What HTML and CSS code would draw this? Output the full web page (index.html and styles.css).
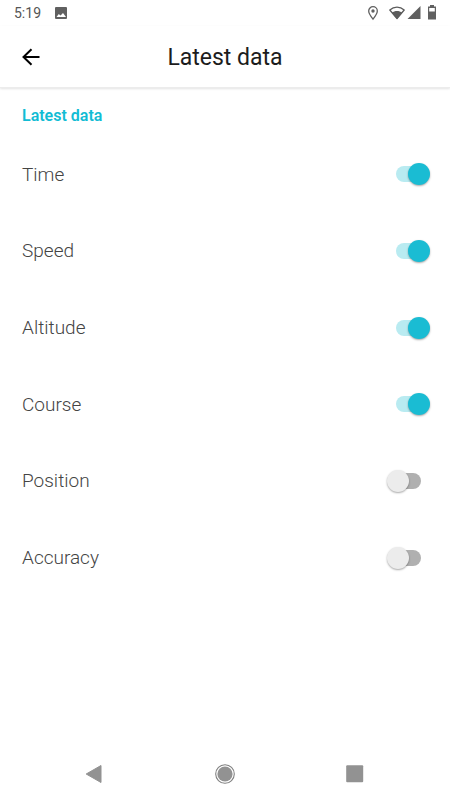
FILE: index.html
```
<!DOCTYPE html>
<html lang="en">
<head>
	<meta charset="UTF-8">
	<meta name="viewport" content="width=device-width, initial-scale=1">
	<title>Latest data</title>
	<link rel="stylesheet" href="styles.css">
</head>
<body>
	<div class="status">
		<span class="clock">5:19</span>
		<svg class="picture" width="14" height="14" viewBox="0 0 14 14">
			<path fill="#606060" fill-rule="evenodd" d="M2 1h10a1 1 0 0 1 1 1v10a1 1 0 0 1-1 1H2a1 1 0 0 1-1-1V2a1 1 0 0 1 1-1zM2.500 11h9.500L9 7 6.500 9.500 4.800 8z"/>
		</svg>
		<div class="signals">
			<svg width="12" height="16" viewBox="0 0 12 16">
				<path fill="none" stroke="#606060" stroke-width="1.300" d="M6 14.200C3.500 11 1.700 8.500 1.700 6a4.300 4.300 0 0 1 8.600 0c0 2.500-1.800 5-4.300 8.200z"/>
				<circle cx="6" cy="6" r="1.700" fill="#606060"/>
			</svg>
			<svg class="wifi" width="16" height="16" viewBox="0 0 16 16">
				<path fill="none" stroke="#5c5c5c" stroke-width="1.300" stroke-linejoin="round" d="M8 13.500L.8 5C5 1.200 11 1.200 15.200 5z"/>
				<path fill="#5c5c5c" d="M8 14L2.800 7.800c3-2.400 7.400-2.400 10.400 0z"/>
			</svg>
			<svg class="cell" width="14" height="16" viewBox="0 0 14 16">
				<path fill="#606060" d="M13.500 1v13H.5z"/>
			</svg>
			<svg class="battery" width="10" height="16" viewBox="0 0 10 16">
				<path fill="#606060" fill-rule="evenodd" d="M3 0h4v1.500h2V14.500H1V1.500h2zM2.200 3v3.500h5.600V3z"/>
			</svg>
		</div>
	</div>
	<header class="bar">
		<button class="back" aria-label="Back">
			<svg width="20" height="20" viewBox="0 0 20 20">
				<path fill="none" stroke="#000" stroke-width="2" d="M18.500 10H3M10.500 2.200L2.500 10l8 7.800"/>
			</svg>
		</button>
		<h1>Latest data</h1>
	</header>
	<main>
		<h2>Latest data</h2>
		<div class="list">
			<label class="item">Time <input type="checkbox" class="switch" checked></label>
			<label class="item">Speed <input type="checkbox" class="switch" checked></label>
			<label class="item">Altitude <input type="checkbox" class="switch" checked></label>
			<label class="item">Course <input type="checkbox" class="switch" checked></label>
			<label class="item">Position <input type="checkbox" class="switch"></label>
			<label class="item">Accuracy <input type="checkbox" class="switch"></label>
		</div>
	</main>
	<nav class="nav">
		<button aria-label="Back">
			<svg width="20" height="20" viewBox="0 0 20 20">
				<path fill="#929292" stroke="#929292" stroke-linejoin="round" d="M16 1.500v17L1.200 10z"/>
			</svg>
		</button>
		<button aria-label="Home">
			<svg width="20" height="20" viewBox="0 0 20 20">
				<circle cx="10" cy="10" r="9.300" fill="none" stroke="#808080" stroke-width="1.100"/>
				<circle cx="10" cy="10" r="7.600" fill="#929292"/>
			</svg>
		</button>
		<button aria-label="Recent apps">
			<svg width="20" height="20" viewBox="0 0 20 20">
				<rect x="1.200" y="1.200" width="17" height="17" rx="1" fill="#929292"/>
			</svg>
		</button>
	</nav>
</body>
</html>
```
FILE: styles.css
```
* {
	box-sizing: border-box;
}

body {
	display: flex;
	flex-direction: column;
	min-height: 100vh;
	margin: 0;
	background-color: #fff;
	font-family: Roboto, "Liberation Sans", sans-serif;
}

button {
	display: flex;
	padding: 0;
	border: none;
	background: none;
}

.status {
	display: flex;
	align-items: center;
	height: 26px;
	padding: 0 13px 0 14px;
	color: #555;
}

.clock {
	font-size: 14px;
}

.picture {
	margin-left: 13px;
}

.signals {
	display: flex;
	margin-left: auto;
}

.wifi {
	margin-left: 10px;
}

.cell {
	margin-left: 2px;
}

.battery {
	margin-left: 6px;
}

.bar {
	display: grid;
	grid-template-columns: 20px 1fr 20px;
	align-items: center;
	height: 62px;
	padding: 0 21px;
	border-bottom: 1px solid #ececec;
	box-shadow: 0 1px 2px #e4e4e4;
}

h1 {
	margin: 0;
	padding-top: 3px;
	color: #1c1c1c;
	font-size: 23px;
	font-weight: 400;
	line-height: 28px;
	text-align: center;
}

h2 {
	margin: 0;
	padding: 18px 22px 10px;
	color: #12bcd4;
	font-size: 16px;
	font-weight: 600;
	line-height: 20px;
}

.list {
	display: grid;
	grid-auto-rows: 1fr;
	min-height: 460px;
}

.item {
	display: flex;
	align-items: center;
	justify-content: space-between;
	padding: 0 20px 0 22px;
	color: #444;
	font-size: 19px;
	font-weight: 300;
}

.switch {
	appearance: none;
	position: relative;
	width: 44px;
	height: 24px;
	margin: 0;
}

.switch::before {
	content: "";
	position: absolute;
	top: 4px;
	left: 10px;
	width: 25px;
	height: 16px;
	border-radius: 8px;
	background-color: #b0b0b0;
}

.switch::after {
	content: "";
	position: absolute;
	top: 1px;
	left: 1px;
	width: 22px;
	height: 22px;
	border-radius: 50%;
	background-color: #ececec;
	box-shadow: 0 1px 2px rgba(0, 0, 0, .35);
}

.switch:checked::before {
	background-color: #b9ebf1;
}

.switch:checked::after {
	left: 22px;
	background-color: #1abcd3;
}

.nav {
	display: flex;
	justify-content: space-between;
	margin-top: auto;
	padding: 16px 85px;
}
```
